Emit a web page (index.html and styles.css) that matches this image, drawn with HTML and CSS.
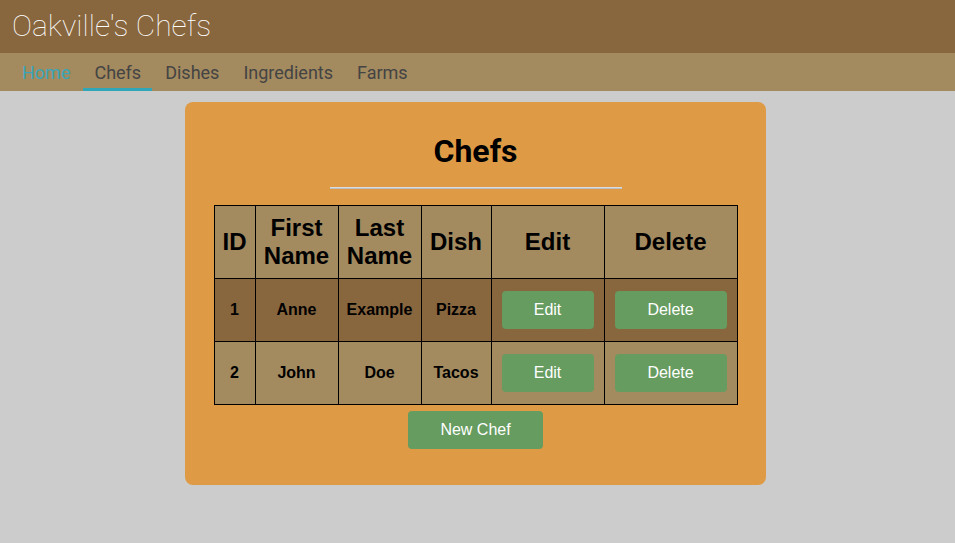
FILE: index.html
```html
<!DOCTYPE html>
<html>
<head>
<meta charset="utf-8">
<title>Oakville's Chefs</title>
<link rel="stylesheet" href="styles.css">
</head>
<body>
<header class="topbar">
  <h1 class="brand">Oakville's Chefs</h1>
</header>
<nav class="nav">
  <a class="nav-item home">Home</a>
  <a class="nav-item active">Chefs</a>
  <a class="nav-item">Dishes</a>
  <a class="nav-item">Ingredients</a>
  <a class="nav-item">Farms</a>
</nav>
<main class="main">
  <section class="card">
    <h2 class="title">Chefs</h2>
    <div class="rule"></div>
    <table class="tbl">
      <colgroup>
        <col class="c-id"><col class="c-first"><col class="c-last"><col class="c-dish"><col class="c-edit"><col class="c-del">
      </colgroup>
      <thead>
        <tr><th>ID</th><th>First Name</th><th>Last Name</th><th>Dish</th><th>Edit</th><th>Delete</th></tr>
      </thead>
      <tbody>
        <tr class="odd"><td>1</td><td>Anne</td><td>Example</td><td>Pizza</td><td><button class="btn">Edit</button></td><td><button class="btn">Delete</button></td></tr>
        <tr class="even"><td>2</td><td>John</td><td>Doe</td><td>Tacos</td><td><button class="btn">Edit</button></td><td><button class="btn">Delete</button></td></tr>
      </tbody>
    </table>
    <div class="actions"><button class="btn btn-new">New Chef</button></div>
  </section>
</main>
</body>
</html>
```
FILE: styles.css
```css
* { box-sizing: border-box; }
html, body { margin: 0; padding: 0; }
body {
  background: #cccccc;
  font-family: Roboto, "Liberation Sans", sans-serif;
  height: 543px;
}
.topbar {
  background: #88663e;
  height: 53px;
  display: flex;
  align-items: center;
  padding-left: 12px;
}
.brand {
  margin: 0;
  font-family: Roboto, sans-serif;
  font-weight: 100;
  font-size: 30px;
  color: #ffffff;
  line-height: 1;
  padding-bottom: 2px;
}
.nav {
  background: #a38a5f;
  height: 38px;
  display: flex;
  gap: 2px;
  padding-left: 11px;
}
.nav-item {
  display: flex;
  align-items: center;
  padding: 4px 11px 0;
  font-size: 18px;
  color: #444444;
  border-bottom: 3px solid transparent;
}
.nav-item.home { color: #3aa5b8; }
.nav-item.active { border-bottom-color: #2fa7b8; }
.main {
  display: flex;
  justify-content: center;
  padding-top: 11px;
  padding-right: 4px;
}
.card {
  width: 581px;
  background: #df9a45;
  border-radius: 8px;
  padding: 30px 0 36px;
  display: flex;
  flex-direction: column;
  align-items: center;
}
.title {
  margin: 0;
  font-family: Roboto, sans-serif;
  font-weight: 700;
  font-size: 32px;
  line-height: 38px;
  color: #000;
}
.rule {
  width: 292px;
  height: 2px;
  background: #dcdcdc;
  border-bottom: 1px solid #b8c0c8;
  margin-top: 17px;
  margin-bottom: 16px;
}
.tbl {
  width: 523px;
  border-collapse: collapse;
  table-layout: fixed;
  font-family: "Liberation Sans", Arial, sans-serif;
  font-weight: 700;
  color: #000;
}
.c-id { width: 41px; }
.c-first { width: 83px; }
.c-last { width: 83px; }
.c-dish { width: 70px; }
.c-edit { width: 113px; }
.c-del { width: 133px; }
.tbl th, .tbl td {
  border: 1px solid #000;
  text-align: center;
  vertical-align: middle;
}
.tbl th {
  background: #a38a5f;
  font-size: 24px;
  line-height: 28px;
  padding: 8px 2px;
  height: 73px;
}
.tbl td {
  font-size: 16px;
  padding: 12px 10px;
  height: 63px;
}
.tbl td:nth-child(-n+4) { padding: 12px 2px; }
.tbl tr.odd td { background: #88663e; }
.tbl tr.even td { background: #a38a5f; }
.btn {
  display: block;
  width: 100%;
  height: 38px;
  border: none;
  border-radius: 4px;
  background: #669c5f;
  color: #ffffff;
  font-family: "Liberation Sans", Arial, sans-serif;
  font-size: 16px;
  font-weight: 400;
  padding: 0;
}
.actions {
  margin-top: 6px;
}
.btn-new {
  width: 135px;
}
```
